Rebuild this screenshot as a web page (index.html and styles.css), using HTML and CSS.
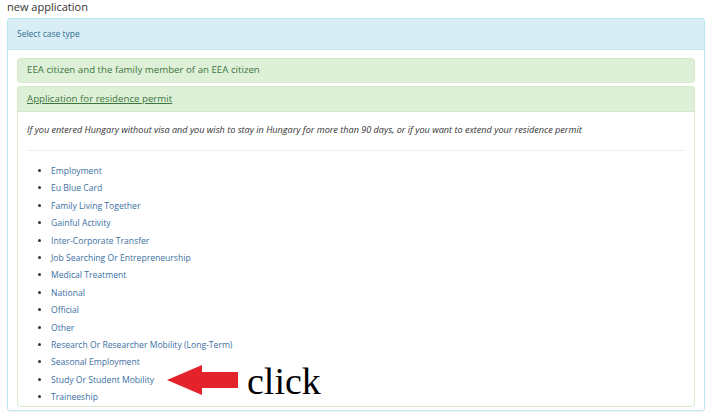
FILE: index.html
```html
<!DOCTYPE html>
<html>
<head>
<meta charset="utf-8">
<link rel="stylesheet" href="styles.css">
</head>
<body>
<div class="page">
  <h1 class="title">new application</h1>
  <div class="panel panel-info">
    <div class="panel-heading info-heading">Select case type</div>
    <div class="panel-body outer-body">
      <div class="panel panel-success">
        <div class="panel-heading success-heading">EEA citizen and the family member of an EEA citizen</div>
      </div>
      <div class="panel panel-success open">
        <div class="panel-heading success-heading"><a class="heading-link" href="#">Application for residence permit</a></div>
        <div class="panel-body inner-body">
          <p class="desc">If you entered Hungary without visa and you wish to stay in Hungary for more than 90 days, or if you want to extend your residence permit</p>
          <hr class="sep">
          <ul class="types">
            <li><a href="#">Employment</a></li>
            <li><a href="#">Eu Blue Card</a></li>
            <li><a href="#">Family Living Together</a></li>
            <li><a href="#">Gainful Activity</a></li>
            <li><a href="#">Inter-Corporate Transfer</a></li>
            <li><a href="#">Job Searching Or Entrepreneurship</a></li>
            <li><a href="#">Medical Treatment</a></li>
            <li><a href="#">National</a></li>
            <li><a href="#">Official</a></li>
            <li><a href="#">Other</a></li>
            <li><a href="#">Research Or Researcher Mobility (Long-Term)</a></li>
            <li><a href="#">Seasonal Employment</a></li>
            <li class="target"><a href="#">Study Or Student Mobility</a>
              <span class="callout">
                <svg class="arrow" width="71" height="31" viewBox="0 0 71 31"><polygon points="0,15 35,0 35,7 71,7 71,23 35,23 35,30" fill="#e3222b"/></svg>
                <span class="click">click</span>
              </span>
            </li>
            <li><a href="#">Traineeship</a></li>
          </ul>
        </div>
      </div>
    </div>
  </div>
</div>
</body>
</html>
```

FILE: styles.css
```css
* { box-sizing: border-box; }
html, body { margin: 0; padding: 0; background: #fff; }
body {
  font-family: "Open Sans", "Liberation Sans", sans-serif;
  color: #333;
  width: 713px;
  height: 413px;
  overflow: hidden;
}
.page { padding: 0 8px 0 7px; }
.title {
  margin: 0;
  font-size: 11px;
  font-weight: 400;
  line-height: 14px;
  height: 18px;
  color: #333;
}
.panel {
  border: 1px solid transparent;
  border-radius: 3px;
  background: #fff;
}
.panel-info { border-color: #bce8f1; box-shadow: 0 1px 1px rgba(0,0,0,0.05); }
.info-heading {
  background: #d9edf7;
  color: #31708f;
  font-size: 8.5px;
  height: 31px;
  line-height: 29px;
  padding: 0 9px;
  border-bottom: 1px solid #bce8f1;
}
.outer-body { padding: 8px 9px 0 9px; }
.panel-success { border-color: #d6e9c6; margin-bottom: 3px; }
.success-heading {
  background: #dff0d8;
  color: #3c763d;
  font-size: 9.7px;
  height: 23px;
  line-height: 22px;
  padding: 0 9px;
}
.open .success-heading { height: 25px; line-height: 24px; border-bottom: 1px solid #d6e9c6; }
.heading-link { color: #3c763d; text-decoration: underline; }
.inner-body { padding: 0 9px 0 9px; }
.desc {
  margin: 0;
  padding-top: 11px;
  font-size: 9.1px;
  font-style: italic;
  line-height: 14px;
  height: 38px;
  color: #333;
}
.sep {
  margin: 0;
  border: 0;
  border-top: 1px solid #eee;
}
.types {
  margin: 0;
  padding: 12px 0 0 24px;
  list-style: disc;
  font-size: 8.6px;
  line-height: 17.4px;
}
.types li { height: 17.4px; }
.types li::marker { color: #333; }
.types a { color: #3b6fa2; text-decoration: none; }
.target { position: relative; }
.callout {
  position: absolute;
  left: 116px;
  top: -9px;
  display: flex;
  align-items: center;
  gap: 9px;
}
.arrow { display: block; }
.click {
  font-family: "Liberation Serif", "Times New Roman", serif;
  font-size: 38px;
  line-height: 36px;
  color: #000;
}
```
